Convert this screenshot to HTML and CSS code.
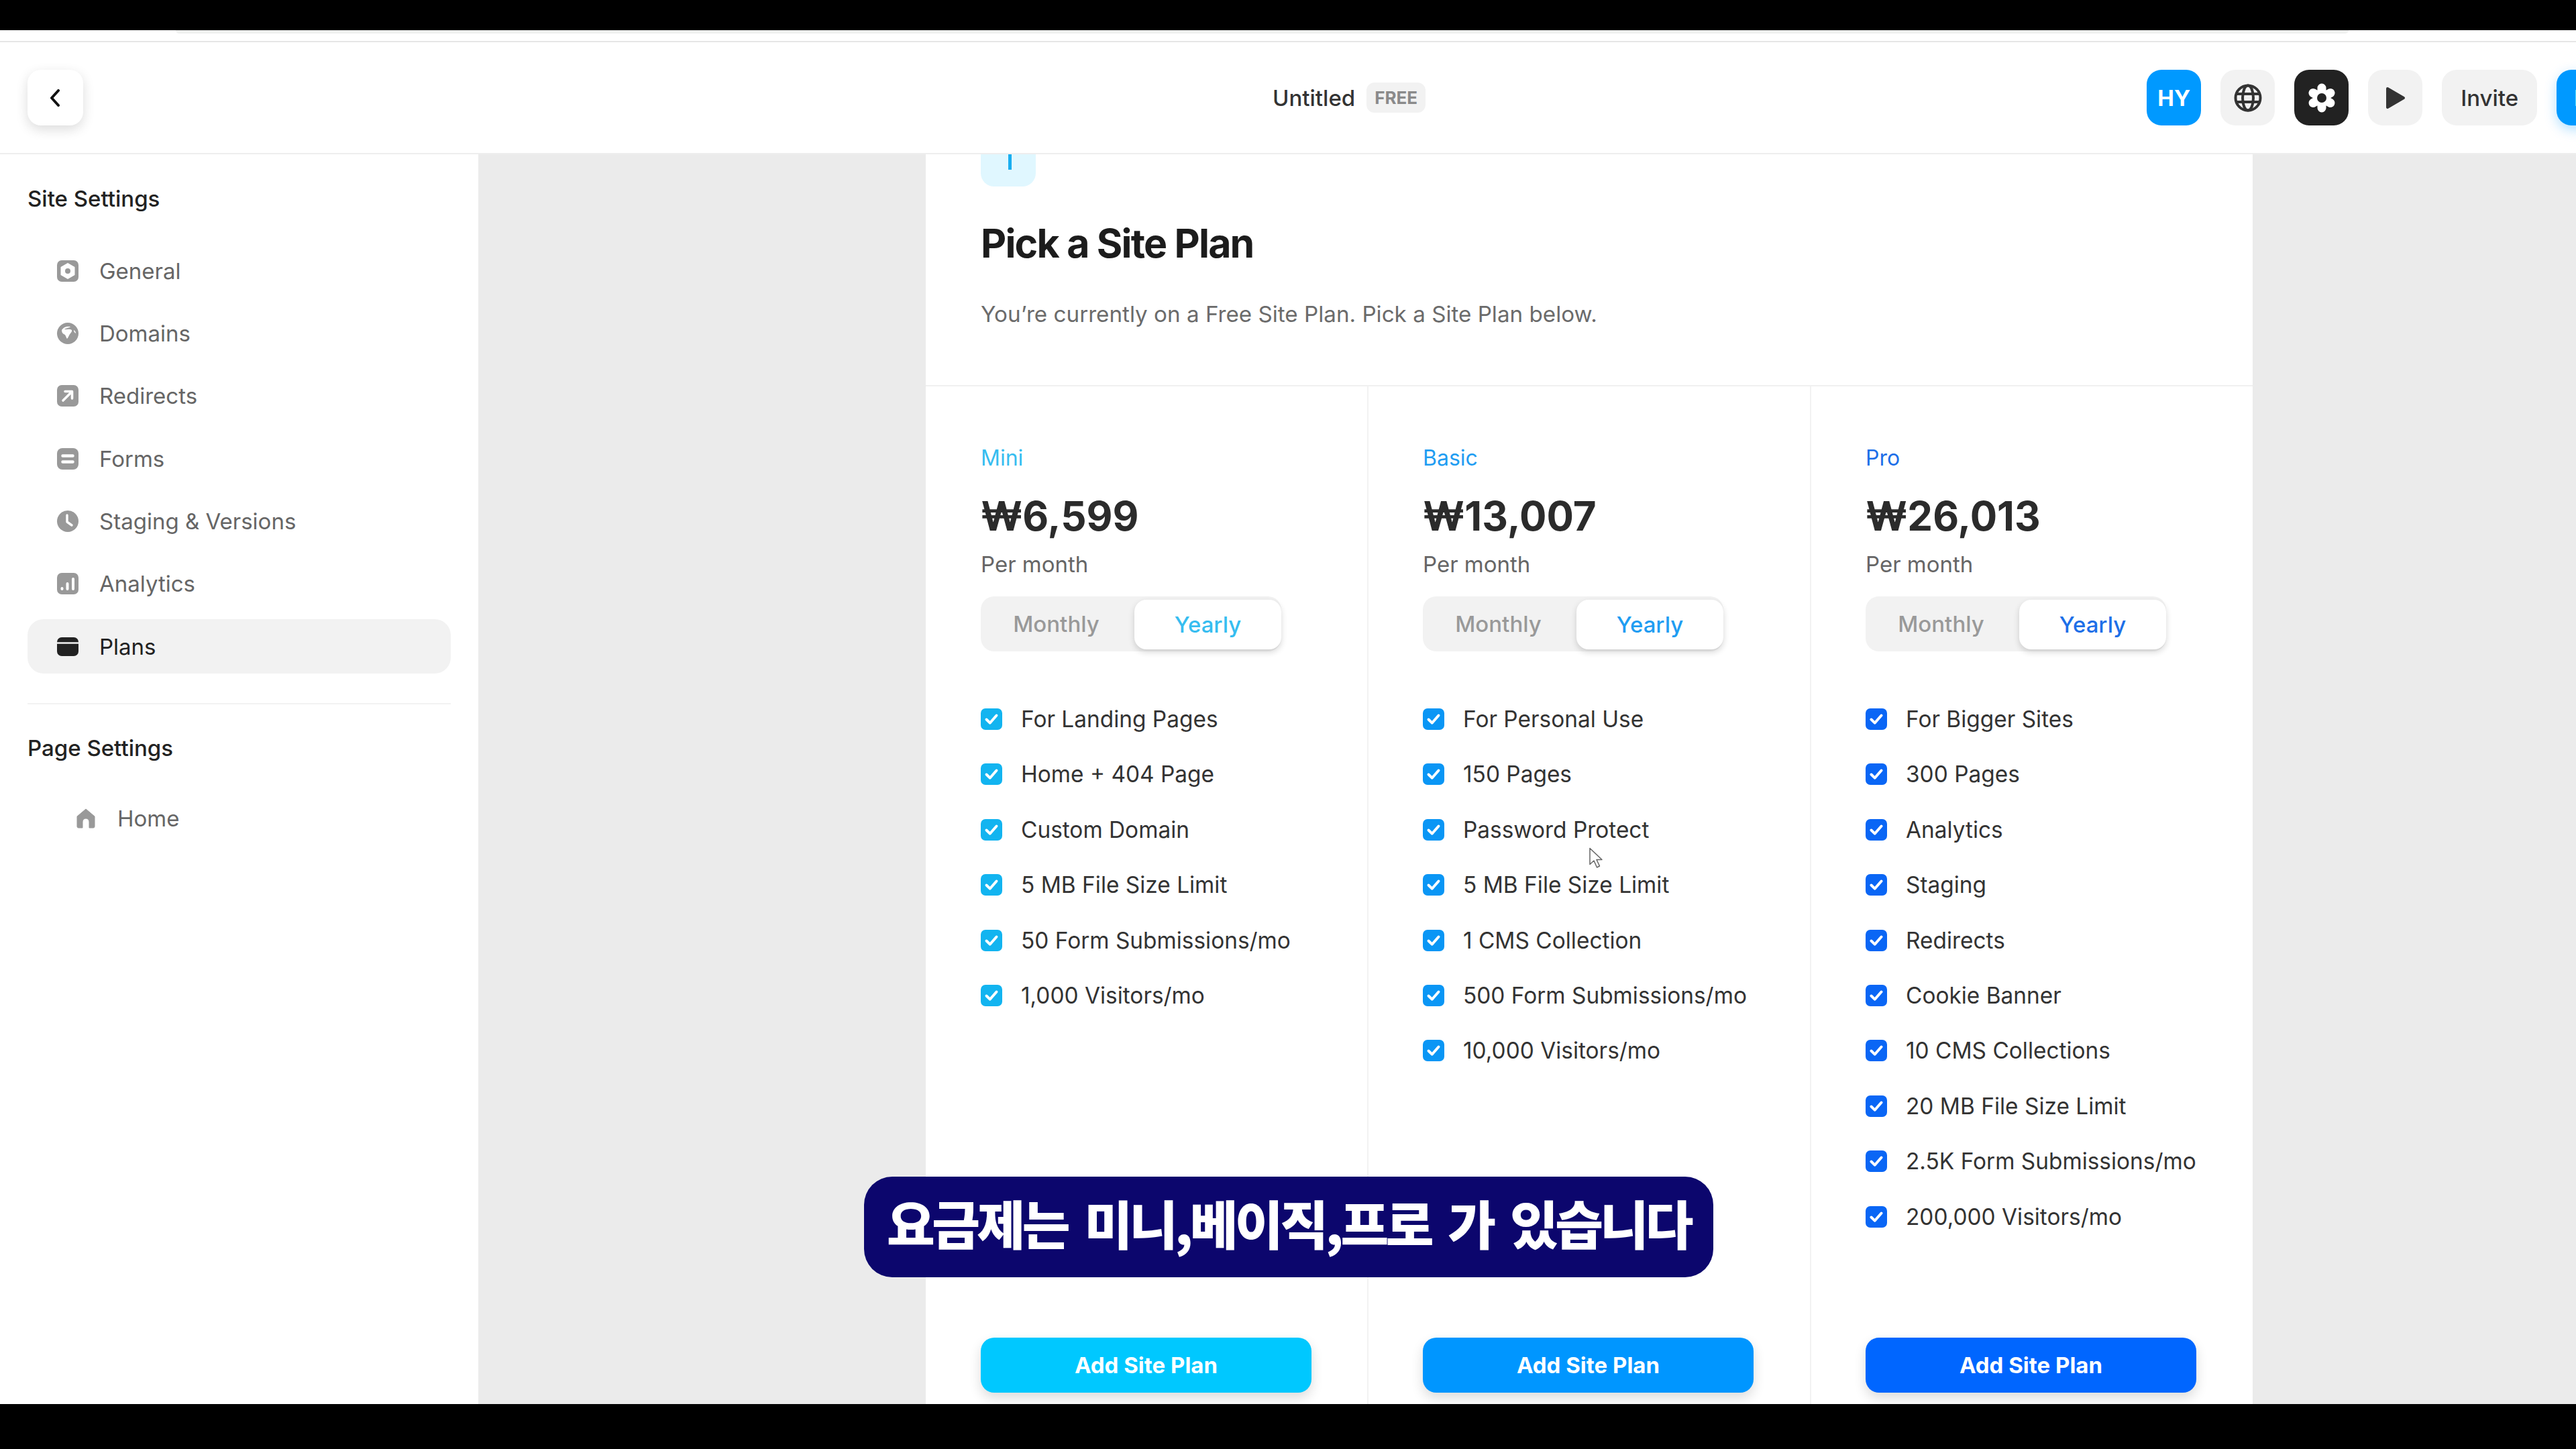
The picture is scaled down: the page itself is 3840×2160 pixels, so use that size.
FILE: index.html
```html
<!DOCTYPE html>
<html lang="en">
<head>
    <meta charset="UTF-8">
    <title>Pick a Site Plan</title>
    <link rel="stylesheet" href="styles.css">
</head>
<body>
    <svg class="defs" width="0" height="0">
        <symbol id="check" viewBox="0 0 32 32">
            <rect width="32" height="32" rx="7" fill="currentColor"/>
            <path d="M8.5 16.5l5.2 5.2L23.5 10.5" fill="none" stroke="#fff" stroke-width="4" stroke-linecap="round" stroke-linejoin="round"/>
        </symbol>
    </svg>

    <div class="top-bar"><div class="tab-strip"></div></div>

    <header class="header">
        <button class="back">
            <svg width="18" height="26" viewBox="0 0 18 26"><path d="M13 2L3 13l10 11" fill="none" stroke="#111" stroke-width="4" stroke-linecap="round" stroke-linejoin="round"/></svg>
        </button>
        <div class="title">
            <span>Untitled</span>
            <span class="badge">FREE</span>
        </div>
        <div class="actions">
            <button class="btn btn-avatar">HY</button>
            <button class="btn btn-grey">
                <svg width="42" height="42" viewBox="0 0 42 42" fill="none" stroke="#333" stroke-width="4"><circle cx="21" cy="21" r="18.500"/><ellipse cx="21" cy="21" rx="8" ry="18.500"/><path d="M3 15h36M3 27h36"/></svg>
            </button>
            <button class="btn btn-dark">
                <svg width="44" height="46" viewBox="0 0 44 46"><g stroke="#fff" stroke-width="13" stroke-linecap="round"><path d="M22 23V8M22 23V38M22 23L9 15.500M22 23L35 15.500M22 23L9 30.500M22 23L35 30.500"/></g><circle cx="22" cy="23" r="7" fill="#222"/></svg>
            </button>
            <button class="btn btn-grey">
                <svg width="32" height="36" viewBox="0 0 32 36"><path d="M4 4l24 14L4 32z" fill="#333" stroke="#333" stroke-width="4" stroke-linejoin="round"/></svg>
            </button>
            <button class="btn btn-grey btn-invite">Invite</button>
            <button class="btn btn-publish">Publish</button>
        </div>
    </header>

    <div class="main">
        <aside class="sidebar">
            <h4 class="side-title">Site Settings</h4>
            <ul class="side-list">
                <li class="side-item">
                    <svg width="32" height="32" viewBox="0 0 32 32"><rect width="32" height="32" rx="7" fill="#999"/><path d="M16 5l9.500 5.500v11L16 27l-9.500-5.500v-11z" fill="#fff" stroke="#fff" stroke-width="2" stroke-linejoin="round"/><circle cx="16" cy="16" r="4" fill="#999"/></svg>
                    General
                </li>
                <li class="side-item">
                    <svg width="32" height="32" viewBox="0 0 32 32"><circle cx="16" cy="16" r="16" fill="#999"/><path d="M7 11c3-5 8-6 13-5-2 2-7 2-9 4 4 0 9-1 11 1 1 3-3 5-4 8-1 2-2 4-3 5-2-3-2-6-5-7-2-1-3-3-3-6zM25 11c2 1 3 3 3 5-2-1-3-3-3-5z" fill="#fff"/></svg>
                    Domains
                </li>
                <li class="side-item">
                    <svg width="32" height="32" viewBox="0 0 32 32"><rect width="32" height="32" rx="7" fill="#999"/><path d="M9 23L22 10M12 9.500h10.500V20" fill="none" stroke="#fff" stroke-width="3.600" stroke-linecap="round" stroke-linejoin="round"/></svg>
                    Redirects
                </li>
                <li class="side-item">
                    <svg width="32" height="32" viewBox="0 0 32 32"><rect width="32" height="32" rx="8" fill="#999"/><path d="M8.500 11.500h15M8.500 20.500h15" stroke="#fff" stroke-width="4.500" stroke-linecap="round"/></svg>
                    Forms
                </li>
                <li class="side-item">
                    <svg width="32" height="32" viewBox="0 0 32 32"><circle cx="16" cy="16" r="16" fill="#999"/><path d="M15 7v10l7 5" fill="none" stroke="#fff" stroke-width="3.400" stroke-linecap="round" stroke-linejoin="round"/></svg>
                    Staging &amp; Versions
                </li>
                <li class="side-item">
                    <svg width="32" height="32" viewBox="0 0 32 32"><rect width="32" height="32" rx="7" fill="#999"/><path d="M7.500 24v-1M15.500 24v-8M24 24V9" stroke="#fff" stroke-width="4" stroke-linecap="round"/></svg>
                    Analytics
                </li>
                <li class="side-item active">
                    <svg width="32" height="28" viewBox="0 0 32 28"><rect width="32" height="28" rx="7" fill="#222"/><path d="M0 8.500h32" stroke="#f2f2f2" stroke-width="2.500"/></svg>
                    Plans
                </li>
            </ul>
            <hr class="side-rule">
            <h4 class="side-title side-title-page">Page Settings</h4>
            <div class="side-home">
                <svg width="28" height="30" viewBox="0 0 28 30"><path d="M14 1L1 12v15a2 2 0 0 0 2 2h6V20a5 5 0 0 1 10 0v9h6a2 2 0 0 0 2-2V12z" fill="#999" stroke="#999" stroke-linejoin="round"/></svg>
                Home
            </div>
        </aside>

        <section class="sheet">
            <div class="sheet-head">
                <div class="tile">
                    <svg width="82" height="82" viewBox="0 0 82 82"><path d="M43.500 30v27" stroke="#18aef0" stroke-width="5"/></svg>
                </div>
                <h1 class="heading">Pick a Site Plan</h1>
                <p class="lead">You’re currently on a Free Site Plan. Pick a Site Plan below.</p>
            </div>

            <div class="plans">
                <div class="plan plan-mini">
                    <div class="plan-name">Mini</div>
                    <div class="plan-price">₩6,599</div>
                    <div class="plan-per">Per month</div>
                    <div class="toggle"><span class="tab-off">Monthly</span><span class="tab-on">Yearly</span></div>
                    <ul class="features">
                        <li><svg class="tick"><use href="#check"/></svg>For Landing Pages</li>
                        <li><svg class="tick"><use href="#check"/></svg>Home + 404 Page</li>
                        <li><svg class="tick"><use href="#check"/></svg>Custom Domain</li>
                        <li><svg class="tick"><use href="#check"/></svg>5 MB File Size Limit</li>
                        <li><svg class="tick"><use href="#check"/></svg>50 Form Submissions/mo</li>
                        <li><svg class="tick"><use href="#check"/></svg>1,000 Visitors/mo</li>
                    </ul>
                    <button class="add">Add Site Plan</button>
                </div>

                <div class="plan plan-basic">
                    <div class="plan-name">Basic</div>
                    <div class="plan-price">₩13,007</div>
                    <div class="plan-per">Per month</div>
                    <div class="toggle"><span class="tab-off">Monthly</span><span class="tab-on">Yearly</span></div>
                    <ul class="features">
                        <li><svg class="tick"><use href="#check"/></svg>For Personal Use</li>
                        <li><svg class="tick"><use href="#check"/></svg>150 Pages</li>
                        <li><svg class="tick"><use href="#check"/></svg>Password Protect</li>
                        <li><svg class="tick"><use href="#check"/></svg>5 MB File Size Limit</li>
                        <li><svg class="tick"><use href="#check"/></svg>1 CMS Collection</li>
                        <li><svg class="tick"><use href="#check"/></svg>500 Form Submissions/mo</li>
                        <li><svg class="tick"><use href="#check"/></svg>10,000 Visitors/mo</li>
                    </ul>
                    <button class="add">Add Site Plan</button>
                </div>

                <div class="plan plan-pro">
                    <div class="plan-name">Pro</div>
                    <div class="plan-price">₩26,013</div>
                    <div class="plan-per">Per month</div>
                    <div class="toggle"><span class="tab-off">Monthly</span><span class="tab-on">Yearly</span></div>
                    <ul class="features">
                        <li><svg class="tick"><use href="#check"/></svg>For Bigger Sites</li>
                        <li><svg class="tick"><use href="#check"/></svg>300 Pages</li>
                        <li><svg class="tick"><use href="#check"/></svg>Analytics</li>
                        <li><svg class="tick"><use href="#check"/></svg>Staging</li>
                        <li><svg class="tick"><use href="#check"/></svg>Redirects</li>
                        <li><svg class="tick"><use href="#check"/></svg>Cookie Banner</li>
                        <li><svg class="tick"><use href="#check"/></svg>10 CMS Collections</li>
                        <li><svg class="tick"><use href="#check"/></svg>20 MB File Size Limit</li>
                        <li><svg class="tick"><use href="#check"/></svg>2.5K Form Submissions/mo</li>
                        <li><svg class="tick"><use href="#check"/></svg>200,000 Visitors/mo</li>
                    </ul>
                    <button class="add">Add Site Plan</button>
                </div>
            </div>
        </section>
    </div>

    <div class="bottom-bar"></div>

    <svg class="cursor" width="22" height="32" viewBox="0 0 22 32"><path d="M2 1.500v24l6-5.500 4.500 10 4-2-4.500-9.500h8z" fill="#fff" stroke="#666" stroke-width="1.500" stroke-linejoin="round"/></svg>
    <div class="caption">요금제는 미니,베이직,프로 가 있습니다</div>
</body>
</html>
```

FILE: styles.css
```css
* {
    box-sizing: border-box;
}
html, body {
    margin: 0;
    padding: 0;
}
body {
    position: relative;
    width: 3840px;
    height: 2160px;
    overflow: hidden;
    display: flex;
    flex-direction: column;
    background-color: #000;
    font-family: 'Inter', 'Noto Sans', sans-serif;
    color: #333;
}
ul {
    list-style: none;
    margin: 0;
    padding: 0;
}
button {
    border: none;
    font-family: inherit;
    padding: 0;
}
.defs {
    position: absolute;
}

/* video frame */
.top-bar {
    height: 61px;
    flex: none;
    background: linear-gradient(#000 45px, #fff 45px);
    padding: 45px 339px 0 262px;
}
.tab-strip {
    height: 5px;
    background-color: #f0f1f0;
    border-radius: 0 0 8px 8px;
}
.bottom-bar {
    height: 67px;
    flex: none;
    background-color: #000;
}

/* header */
.header {
    height: 169px;
    flex: none;
    display: flex;
    align-items: center;
    background-color: #fff;
    border-top: 2px solid #e6e6e6;
    border-bottom: 2px solid #eee;
    padding-left: 41px;
}
.back {
    width: 83px;
    height: 83px;
    flex: none;
    display: flex;
    align-items: center;
    justify-content: center;
    background-color: #fff;
    border-radius: 20px;
    box-shadow: 0 6px 18px rgba(0, 0, 0, 0.14);
}
.title {
    display: flex;
    align-items: center;
    gap: 17px;
    margin-left: 1773px;
    font-size: 33px;
    font-weight: 500;
    color: #333;
    flex: none;
}
.badge {
    width: 88px;
    height: 45px;
    display: flex;
    align-items: center;
    justify-content: center;
    background-color: #f2f2f2;
    border-radius: 12px;
    font-size: 26px;
    font-weight: 700;
    color: #8a8a8a;
}
.actions {
    display: flex;
    align-items: center;
    gap: 29px;
    margin-left: 1075px;
    flex: none;
}
.btn {
    width: 81px;
    height: 83px;
    flex: none;
    display: flex;
    align-items: center;
    justify-content: center;
    border-radius: 22px;
    font-size: 33px;
}
.btn-avatar {
    background-color: #0099ff;
    color: #fff;
    font-weight: 700;
}
.btn-grey {
    background-color: #f2f2f2;
    color: #333;
}
.btn-dark {
    background-color: #222;
}
.btn-invite {
    width: 142px;
    font-weight: 500;
}
.btn-publish {
    width: 170px;
    background-color: #0099ff;
    color: #fff;
    font-weight: 700;
    justify-content: flex-start;
    padding-left: 26px;
    box-shadow: 0 6px 18px rgba(0, 153, 255, 0.3);
}

/* page */
.main {
    flex: 1;
    min-height: 0;
    display: flex;
    background-color: #ebebeb;
    overflow: hidden;
}
.sidebar {
    width: 713px;
    flex: none;
    background-color: #fff;
    padding: 46px 41px 0;
}
.side-title {
    margin: 0 0 47px;
    font-size: 33px;
    line-height: 40px;
    font-weight: 500;
    color: #222;
}
.side-title-page {
    margin-bottom: 65px;
}
.side-list {
    display: flex;
    flex-direction: column;
    gap: 12.4px;
}
.side-item {
    height: 81px;
    display: flex;
    align-items: center;
    gap: 31px;
    padding-left: 44px;
    font-size: 33px;
    color: #666;
    border-radius: 24px;
}
.side-item.active {
    background-color: #f2f2f2;
    color: #222;
}
.side-rule {
    height: 2px;
    margin: 44px 0 45px;
    border: none;
    background-color: #f2f2f2;
}
.side-home {
    display: flex;
    align-items: center;
    gap: 33px;
    height: 40px;
    padding-left: 73px;
    font-size: 33px;
    color: #666;
}

/* plan sheet */
.sheet {
    width: 1978px;
    flex: none;
    margin-left: 667px;
    background-color: #fff;
}
.sheet-head {
    display: flow-root;
    height: 346px;
    padding: 0 82px;
    border-bottom: 2px solid #f0f0f0;
}
.tile {
    width: 82px;
    height: 82px;
    margin-top: -34px;
    background-color: #e0f7ff;
    border-radius: 20px;
}
.heading {
    margin: 49px 0 0;
    font-size: 59px;
    line-height: 72px;
    font-weight: 700;
    letter-spacing: -1.800px;
    color: #1c1c1c;
}
.lead {
    margin: 49px 0 0;
    font-size: 33.2px;
    line-height: 40px;
    color: #6b6b6b;
}
.plans {
    display: grid;
    grid-template-columns: 658px 660px 660px;
    height: 1517px;
}
.plan {
    display: flex;
    flex-direction: column;
    padding: 87px 81px 17px 81px;
    border-left: 2px solid #f2f2f2;
}
.plan-mini {
    border-left: none;
    padding-left: 82px;
}
.plan-name {
    font-size: 32px;
    line-height: 40px;
    font-weight: 400;
}
.plan-price {
    margin-top: 30px;
    font-size: 60px;
    line-height: 72px;
    font-weight: 700;
    color: #2b2b2b;
}
.plan-per {
    margin-top: 16px;
    font-size: 33px;
    line-height: 40px;
    color: #666;
}
.toggle {
    width: 448px;
    height: 82px;
    margin-top: 28px;
    display: flex;
    align-items: flex-start;
    background-color: #f2f2f2;
    border-radius: 20px;
    font-size: 33px;
    font-weight: 500;
}
.tab-off {
    flex: 1;
    height: 100%;
    padding-right: 4px;
    display: flex;
    align-items: center;
    justify-content: center;
    color: #999;
}
.tab-on {
    width: 219px;
    height: 74px;
    margin-top: 5px;
    display: flex;
    align-items: center;
    justify-content: center;
    background-color: #fff;
    border-radius: 18px;
    box-shadow: 0 4px 10px rgba(0, 0, 0, 0.16);
}
.features {
    margin-top: 81px;
    display: flex;
    flex-direction: column;
    gap: 42.4px;
}
.features li {
    height: 40px;
    display: flex;
    align-items: center;
    gap: 28px;
    font-size: 33.4px;
    color: #333;
    white-space: nowrap;
}
.tick {
    width: 32px;
    height: 32px;
    flex: none;
}
.add {
    width: 493px;
    height: 82px;
    flex: none;
    margin-top: auto;
    border-radius: 20px;
    color: #fff;
    font-size: 33px;
    font-weight: 700;
    box-shadow: 0 8px 18px rgba(0, 0, 0, 0.14);
}
.plan-mini .plan-name, .plan-mini .tab-on {
    color: #36bdf0;
}
.plan-mini .tick {
    color: #12b4f0;
}
.plan-mini .add {
    background-color: #00c8ff;
}
.plan-basic .plan-name, .plan-basic .tab-on {
    color: #1f9df2;
}
.plan-basic .tick {
    color: #0a96f5;
}
.plan-basic .add {
    background-color: #0096ff;
}
.plan-pro .plan-name, .plan-pro .tab-on {
    color: #1d6fe8;
}
.plan-pro .tick {
    color: #0a66f5;
}
.plan-pro .add {
    background-color: #0066ff;
}

/* overlays from the video */
.cursor {
    position: absolute;
    left: 2368px;
    top: 1263px;
}
.caption {
    position: absolute;
    left: 1288px;
    top: 1754px;
    width: 1266px;
    height: 150px;
    padding-bottom: 14px;
    display: flex;
    align-items: center;
    justify-content: center;
    background-color: #0c066d;
    border-radius: 42px;
    color: #fff;
    font-family: 'Noto Sans CJK KR', sans-serif;
    font-size: 78px;
    font-weight: 900;
    letter-spacing: -4.5px;
    word-spacing: 12px;
    white-space: nowrap;
}
```
